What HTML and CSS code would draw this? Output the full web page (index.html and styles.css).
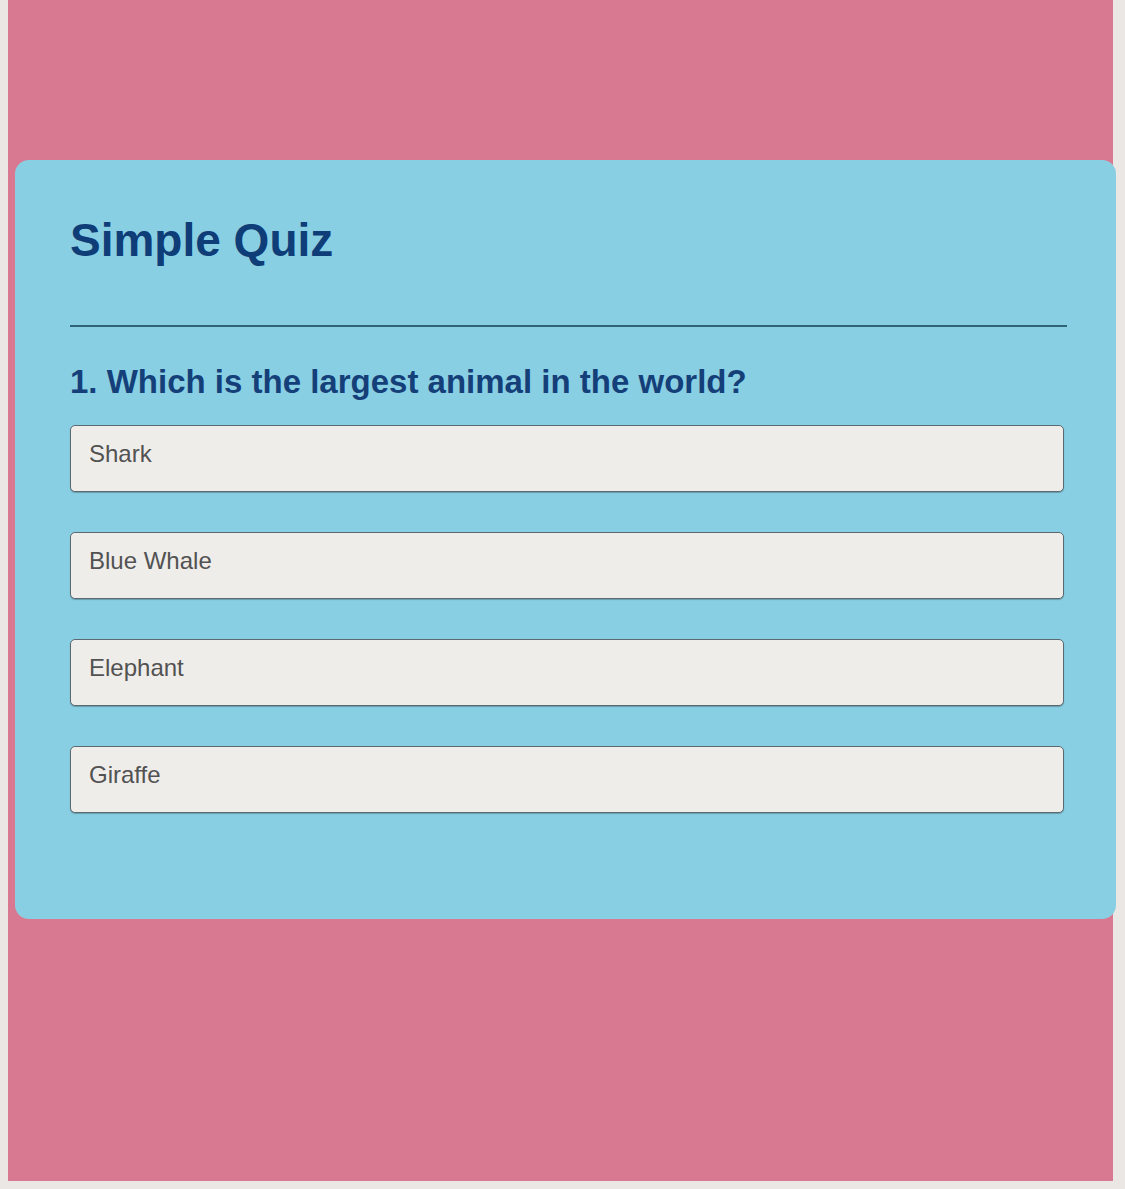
FILE: index.html
```html
<!DOCTYPE html>
<html lang="en">
<head>
<meta charset="utf-8">
<title>Simple Quiz</title>
<link rel="stylesheet" href="styles.css">
</head>
<body>
<div class="page">
  <div class="quiz">
    <h1 class="quiz-title">Simple Quiz</h1>
    <hr class="divider">
    <h2 class="question">1. Which is the largest animal in the world?</h2>
    <div class="options">
      <div class="option">Shark</div>
      <div class="option">Blue Whale</div>
      <div class="option">Elephant</div>
      <div class="option">Giraffe</div>
    </div>
  </div>
</div>
</body>
</html>
```
FILE: styles.css
```css
html, body {
  height: 100%;
}
body {
  margin: 0;
  padding: 0 12px 8px 8px;
  box-sizing: border-box;
  background: #ebe7e5;
  font-family: "Liberation Sans", Arial, sans-serif;
}
.page {
  height: 1181px;
  background: #d97891;
  padding: 160px 0 0 7px;
  box-sizing: border-box;
}
.quiz {
  width: 1101px;
  height: 759px;
  box-sizing: border-box;
  background: #89cfe3;
  border-radius: 14px;
  padding: 54px 0 0 55px;
}
.quiz-title {
  margin: 0;
  font-size: 46px;
  line-height: 53px;
  font-weight: bold;
  color: #0f3d78;
}
.divider {
  margin: 58px 0 0 0;
  width: 997px;
  border: 0;
  height: 1.5px;
  background: #2f6477;
}
.question {
  margin: 36px 0 0 0;
  font-size: 33px;
  line-height: 38px;
  font-weight: bold;
  color: #143f79;
}
.options {
  margin-top: 24px;
  display: flex;
  flex-direction: column;
  gap: 40px;
  width: 994px;
}
.option {
  height: 67px;
  box-sizing: border-box;
  display: flex;
  align-items: center;
  padding: 0 18px 8px 18px;
  background: #efedea;
  border: 1.5px solid #5b6a70;
  border-radius: 5px;
  box-shadow: 0 1px 1px rgba(40, 60, 70, 0.35);
  font-size: 24px;
  color: #525252;
}
```
